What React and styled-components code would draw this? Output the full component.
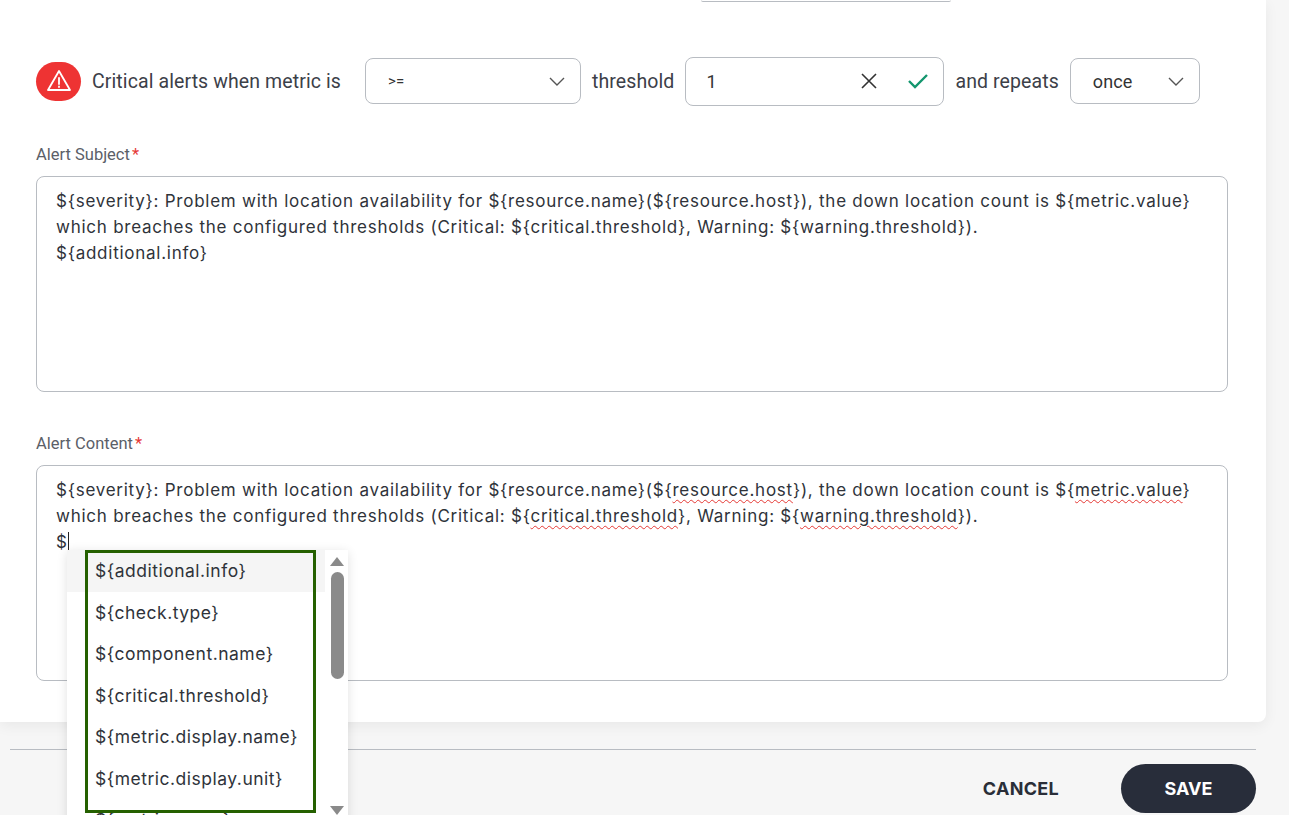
import React from "react";
import styled, { createGlobalStyle } from "styled-components";

const Global = createGlobalStyle`
  html, body { margin: 0; padding: 0; background: #f6f6f6; }
  body { font-family: Roboto, "Liberation Sans", sans-serif; overflow: hidden; }
`;

const Page = styled.div`
  position: relative;
  width: 1289px;
  height: 815px;
  overflow: hidden;
`;

const Card = styled.div`
  width: 1266px;
  height: 722px;
  background: #fff;
  border-radius: 0 0 8px 0;
  box-shadow: 0 4px 14px rgba(0, 0, 0, 0.06);
  box-sizing: border-box;
  padding: 0 38px 0 36px;
`;

const TopStub = styled.div`
  margin-left: 665px;
  width: 250px;
  height: 1px;
  border-bottom: 1px solid #b8bcc2;
  border-radius: 0 0 6px 6px;
`;

const Row = styled.div`
  display: flex;
  align-items: center;
  gap: 11px;
  margin-top: 55px;
  height: 48px;
  font-size: 19.5px;
  letter-spacing: 0.1px;
  color: #3c4048;
`;

const Badge = styled.div`
  width: 45px;
  height: 39px;
  border-radius: 20px;
  background: #ee3333;
  display: flex;
  align-items: center;
  justify-content: center;
`;

const Label = styled.span`
  margin-right: ${(p) => p.gap || 0}px;
`;

const Box = styled.div`
  width: ${(p) => p.w}px;
  height: ${(p) => p.h || 46}px;
  border: 1px solid #b8bcc2;
  border-radius: 8px;
  box-sizing: border-box;
  display: flex;
  align-items: center;
  padding: 0 14px 0 ${(p) => p.pl || 20}px;
  font-size: ${(p) => p.fs || 18}px;
  color: #333;
`;

const Grow = styled.span`
  flex: 1;
`;

const FieldLabel = styled.div`
  font-size: 16.5px;
  color: #5b6068;
  margin: ${(p) => p.mt}px 0 12px;
  span { color: #e53935; margin-left: 2px; }
`;

const Area = styled.div`
  height: 216px;
  border: 1px solid #b8bcc2;
  border-radius: 8px;
  box-sizing: border-box;
  padding: 11px 19px;
  font-family: Inter, "Noto Sans", sans-serif;
  font-size: 17px;
  line-height: 26px;
  color: #2f333a;
  letter-spacing: 0.75px;
`;

const Typo = styled.span`
  text-decoration: underline wavy #e53935;
  text-decoration-thickness: 1px;
  text-underline-offset: 3px;
`;

const Caret = styled.span`
  border-right: 1px solid #222;
`;

const Footer = styled.div`
  margin: 27px 33px 0 10px;
  border-top: 1px solid #b8bcc2;
  display: flex;
  justify-content: flex-end;
  align-items: center;
  gap: 56px;
  padding-top: 14px;
`;

const Cancel = styled.button`
  background: none;
  border: none;
  font-family: Inter, sans-serif;
  font-weight: 700;
  font-size: 18px;
  color: #2a2e38;
  letter-spacing: 0.3px;
`;

const Save = styled.button`
  width: 135px;
  height: 49px;
  border-radius: 25px;
  border: none;
  background: #282d3a;
  color: #fff;
  font-family: Inter, sans-serif;
  font-weight: 700;
  font-size: 18px;
`;

const Menu = styled.div`
  position: absolute;
  left: 67px;
  top: 550px;
  width: 281px;
  height: 280px;
  background: #fff;
  box-shadow: 0 2px 10px rgba(0, 0, 0, 0.12);
`;

const MenuFrame = styled.div`
  position: absolute;
  left: 18px;
  top: 0;
  width: 231px;
  height: 263px;
  border: 3px solid #256000;
  box-sizing: border-box;
`;

const Item = styled.div`
  height: 41.5px;
  display: flex;
  align-items: center;
  padding-left: 28px;
  width: 258px;
  box-sizing: border-box;
  font-family: Inter, "Noto Sans", sans-serif;
  font-size: 17.5px;
  letter-spacing: 0.5px;
  color: #2f333a;
  background: ${(p) => (p.active ? "#f5f5f5" : "transparent")};
`;

const Scroll = styled.div`
  position: absolute;
  right: 4px;
  top: 6px;
  width: 14px;
  height: 260px;
  display: flex;
  flex-direction: column;
  align-items: center;
  gap: 6px;
`;

const Thumb = styled.div`
  width: 13px;
  height: 107px;
  border-radius: 7px;
  background: #8a8a8a;
`;

const Spacer = styled.div`
  flex: 1;
`;

const Chevron = () => (
  <svg width="18" height="18" viewBox="0 0 18 18" fill="none" stroke="#555" strokeWidth="1.4">
    <path d="M2 6l7 7 7-7" />
  </svg>
);

const items = [
  "${additional.info}",
  "${check.type}",
  "${component.name}",
  "${critical.threshold}",
  "${metric.display.name}",
  "${metric.display.unit}",
  "${metric.name}",
];

export default function App() {
  return (
    <Page>
      <Global />
      <Card>
        <TopStub />
        <Row>
          <Badge>
            <svg width="26" height="24" viewBox="0 0 26 24" fill="none" stroke="#fff" strokeWidth="1.8" strokeLinejoin="round">
              <path d="M13 2L24 21H2Z" />
              <path d="M13 9v6M13 17.5v.5" strokeLinecap="round" />
            </svg>
          </Badge>
          <Label gap={13}>Critical alerts when metric is</Label>
          <Box w={216} pl={22} fs={15}>
            <Grow>&gt;=</Grow>
            <Chevron />
          </Box>
          <Label>threshold</Label>
          <Box w={259} h={49}>
            <Grow>1</Grow>
            <svg width="20" height="20" viewBox="0 0 20 20" stroke="#333" strokeWidth="1.6">
              <path d="M3 3l14 14M17 3L3 17" />
            </svg>
            <svg style={{ marginLeft: 28 }} width="22" height="20" viewBox="0 0 22 20" fill="none" stroke="#13966e" strokeWidth="2.4">
              <path d="M2 10l6 6L20 4" />
            </svg>
          </Box>
          <Label>and repeats</Label>
          <Box w={130} pl={22}>
            <Grow>once</Grow>
            <Chevron />
          </Box>
        </Row>

        <FieldLabel mt={40}>Alert Subject<span>*</span></FieldLabel>
        <Area>
          {"${severity}: Problem with location availability for ${resource.name}(${resource.host}), the down location count is ${metric.value} which breaches the configured thresholds (Critical: ${critical.threshold}, Warning: ${warning.threshold})."}
          <br />
          {"${additional.info}"}
        </Area>

        <FieldLabel mt={42}>Alert Content<span>*</span></FieldLabel>
        <Area>
          {"${severity}: Problem with location availability for ${resource.name}(${"}
          <Typo>resource.host</Typo>
          {"}), the down location count is ${"}
          <Typo>metric.value</Typo>
          {"} which breaches the configured thresholds (Critical: ${"}
          <Typo>critical.threshold</Typo>
          {"}, Warning: ${"}
          <Typo>warning.threshold</Typo>
          {"})."}
          <br />
          <Caret>$</Caret>
        </Area>
      </Card>

      <Footer>
        <Cancel>CANCEL</Cancel>
        <Save>SAVE</Save>
      </Footer>

      <Menu>
        {items.map((t, i) => (
          <Item key={t} active={i === 0}>{t}</Item>
        ))}
        <MenuFrame />
        <Scroll>
          <svg width="14" height="10" viewBox="0 0 14 10"><path d="M0 10L7 1l7 9Z" fill="#8a8a8a" /></svg>
          <Thumb />
          <Spacer />
          <svg width="14" height="10" viewBox="0 0 14 10"><path d="M0 0l7 9 7-9Z" fill="#8a8a8a" /></svg>
        </Scroll>
      </Menu>
    </Page>
  );
}
